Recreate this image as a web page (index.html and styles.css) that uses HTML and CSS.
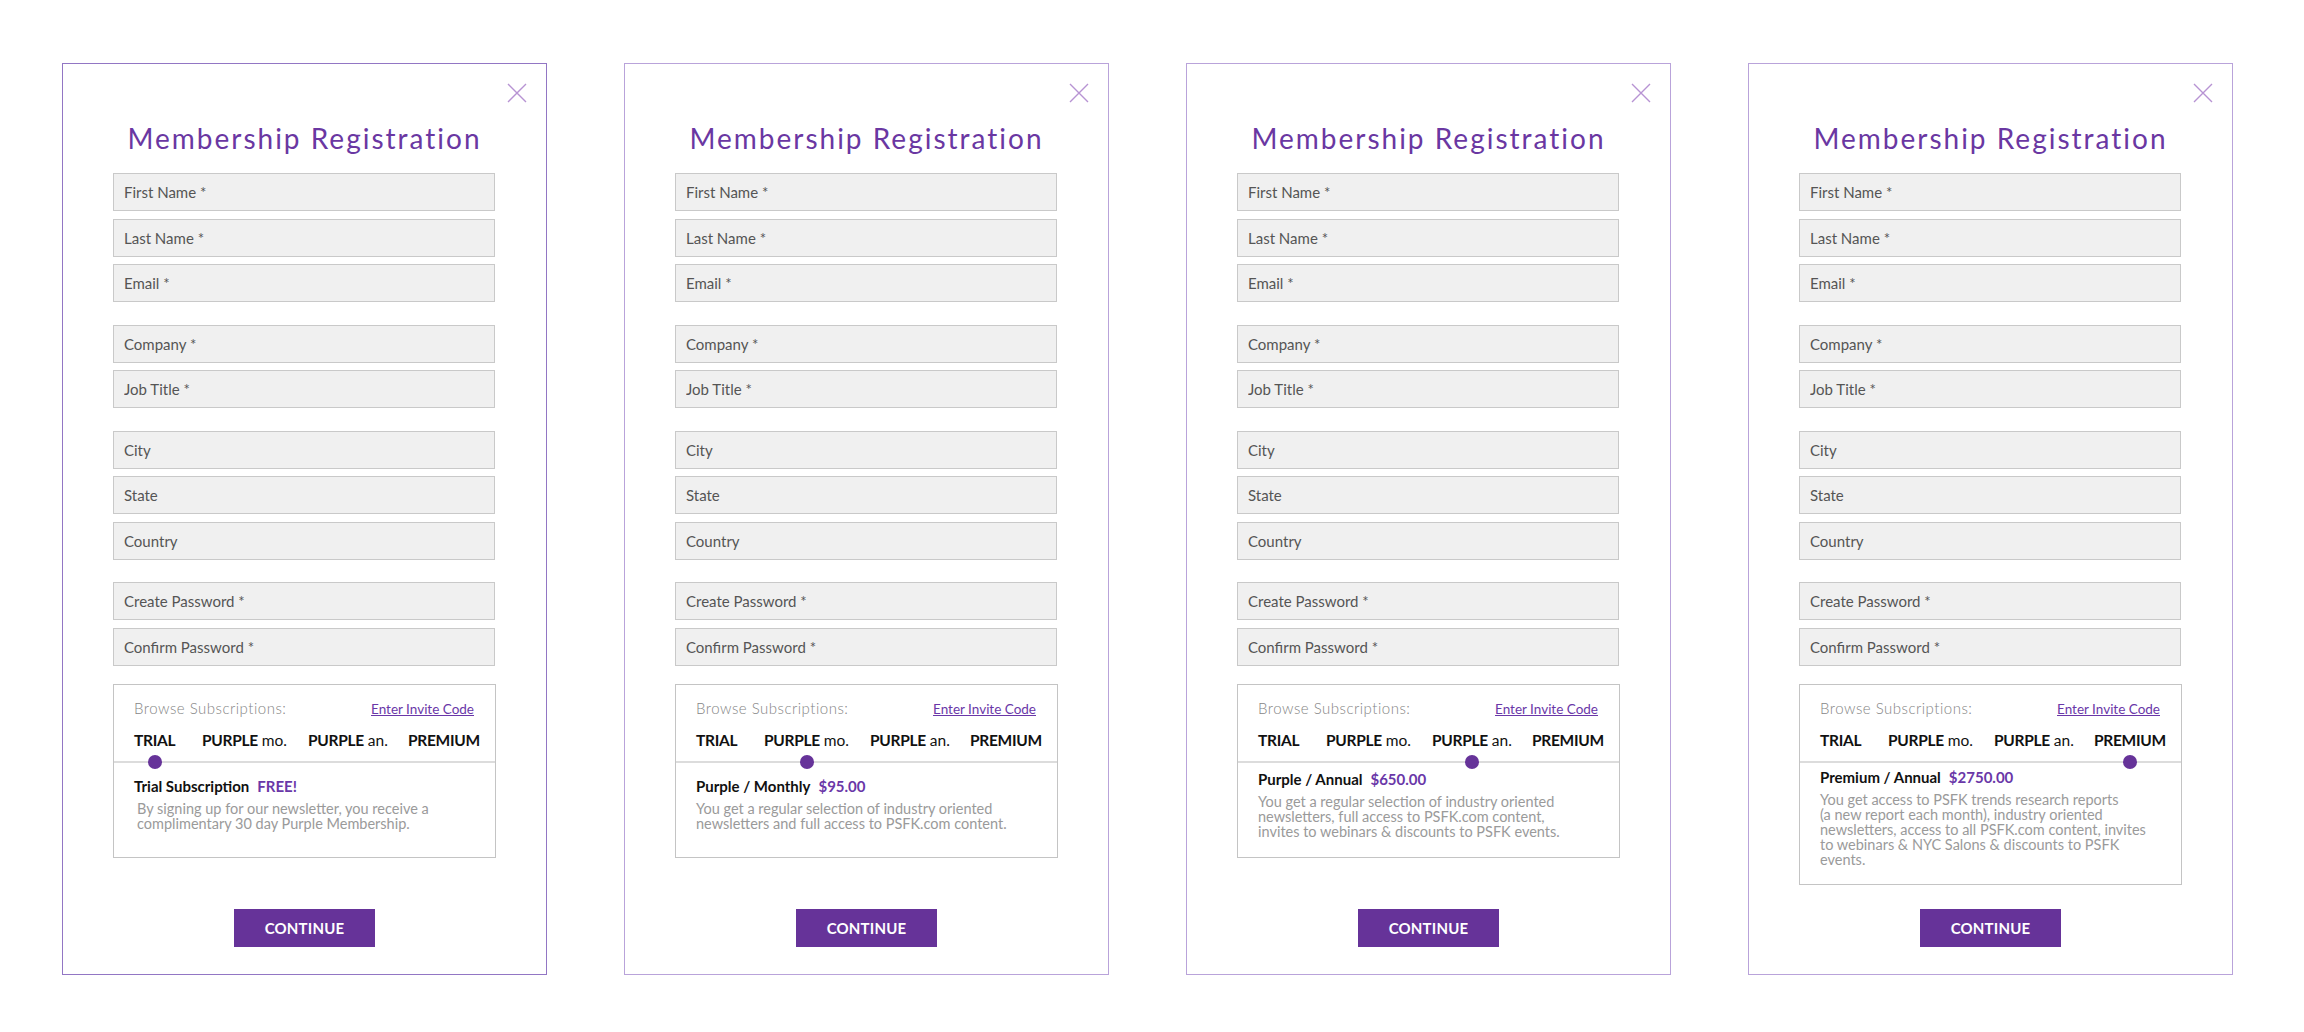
FILE: index.html
```html
<!DOCTYPE html>
<html lang="en">
<head>
<meta charset="utf-8">
<title>Membership Registration</title>
<link rel="stylesheet" href="styles.css">
</head>
<body>
<main class="board">

  <section class="card card-first">
    <button class="close" aria-label="Close"><svg viewBox="0 0 20 20" width="20" height="20"><path d="M1 1 L19 19 M19 1 L1 19" /></svg></button>
    <h1 class="title">Membership Registration</h1>
    <form class="form">
      <div class="group"><input class="field" placeholder="First Name *"><input class="field" placeholder="Last Name *"><input class="field" placeholder="Email *"></div>
      <div class="group"><input class="field" placeholder="Company *"><input class="field" placeholder="Job Title *"></div>
      <div class="group"><input class="field" placeholder="City"><input class="field" placeholder="State"><input class="field" placeholder="Country"></div>
      <div class="group"><input class="field" placeholder="Create Password *"><input class="field" placeholder="Confirm Password *"></div>
      <div class="subs">
        <div class="subs-top">
          <div class="subs-head"><span class="browse">Browse Subscriptions:</span><a class="invite" href="#">Enter Invite Code</a></div>
          <div class="tabs">
            <span class="tab active"><b>TRIAL</b></span>
            <span class="tab"><b>PURPLE</b> mo.</span>
            <span class="tab"><b>PURPLE</b> an.</span>
            <span class="tab"><b>PREMIUM</b></span>
          </div>
        </div>
        <div class="subs-body">
          <div class="plan"><b>Trial Subscription</b><span class="price">FREE!</span></div>
          <p class="desc indent">By signing up for our newsletter, you receive a<br>complimentary 30 day Purple Membership.</p>
        </div>
      </div>
    </form>
    <button class="continue" type="button">CONTINUE</button>
  </section>

  <section class="card">
    <button class="close" aria-label="Close"><svg viewBox="0 0 20 20" width="20" height="20"><path d="M1 1 L19 19 M19 1 L1 19" /></svg></button>
    <h1 class="title">Membership Registration</h1>
    <form class="form">
      <div class="group"><input class="field" placeholder="First Name *"><input class="field" placeholder="Last Name *"><input class="field" placeholder="Email *"></div>
      <div class="group"><input class="field" placeholder="Company *"><input class="field" placeholder="Job Title *"></div>
      <div class="group"><input class="field" placeholder="City"><input class="field" placeholder="State"><input class="field" placeholder="Country"></div>
      <div class="group"><input class="field" placeholder="Create Password *"><input class="field" placeholder="Confirm Password *"></div>
      <div class="subs">
        <div class="subs-top">
          <div class="subs-head"><span class="browse">Browse Subscriptions:</span><a class="invite" href="#">Enter Invite Code</a></div>
          <div class="tabs">
            <span class="tab"><b>TRIAL</b></span>
            <span class="tab active"><b>PURPLE</b> mo.</span>
            <span class="tab"><b>PURPLE</b> an.</span>
            <span class="tab"><b>PREMIUM</b></span>
          </div>
        </div>
        <div class="subs-body">
          <div class="plan"><b>Purple / Monthly</b><span class="price">$95.00</span></div>
          <p class="desc">You get a regular selection of industry oriented<br>newsletters and full access to PSFK.com content.</p>
        </div>
      </div>
    </form>
    <button class="continue" type="button">CONTINUE</button>
  </section>

  <section class="card">
    <button class="close" aria-label="Close"><svg viewBox="0 0 20 20" width="20" height="20"><path d="M1 1 L19 19 M19 1 L1 19" /></svg></button>
    <h1 class="title">Membership Registration</h1>
    <form class="form">
      <div class="group"><input class="field" placeholder="First Name *"><input class="field" placeholder="Last Name *"><input class="field" placeholder="Email *"></div>
      <div class="group"><input class="field" placeholder="Company *"><input class="field" placeholder="Job Title *"></div>
      <div class="group"><input class="field" placeholder="City"><input class="field" placeholder="State"><input class="field" placeholder="Country"></div>
      <div class="group"><input class="field" placeholder="Create Password *"><input class="field" placeholder="Confirm Password *"></div>
      <div class="subs">
        <div class="subs-top">
          <div class="subs-head"><span class="browse">Browse Subscriptions:</span><a class="invite" href="#">Enter Invite Code</a></div>
          <div class="tabs">
            <span class="tab"><b>TRIAL</b></span>
            <span class="tab"><b>PURPLE</b> mo.</span>
            <span class="tab active"><b>PURPLE</b> an.</span>
            <span class="tab"><b>PREMIUM</b></span>
          </div>
        </div>
        <div class="subs-body">
          <div class="plan"><b>Purple / Annual</b><span class="price">$650.00</span></div>
          <p class="desc">You get a regular selection of industry oriented<br>newsletters, full access to PSFK.com content,<br>invites to webinars &amp; discounts to PSFK events.</p>
        </div>
      </div>
    </form>
    <button class="continue" type="button">CONTINUE</button>
  </section>

  <section class="card">
    <button class="close" aria-label="Close"><svg viewBox="0 0 20 20" width="20" height="20"><path d="M1 1 L19 19 M19 1 L1 19" /></svg></button>
    <h1 class="title">Membership Registration</h1>
    <form class="form">
      <div class="group"><input class="field" placeholder="First Name *"><input class="field" placeholder="Last Name *"><input class="field" placeholder="Email *"></div>
      <div class="group"><input class="field" placeholder="Company *"><input class="field" placeholder="Job Title *"></div>
      <div class="group"><input class="field" placeholder="City"><input class="field" placeholder="State"><input class="field" placeholder="Country"></div>
      <div class="group"><input class="field" placeholder="Create Password *"><input class="field" placeholder="Confirm Password *"></div>
      <div class="subs">
        <div class="subs-top">
          <div class="subs-head"><span class="browse">Browse Subscriptions:</span><a class="invite" href="#">Enter Invite Code</a></div>
          <div class="tabs">
            <span class="tab"><b>TRIAL</b></span>
            <span class="tab"><b>PURPLE</b> mo.</span>
            <span class="tab"><b>PURPLE</b> an.</span>
            <span class="tab active"><b>PREMIUM</b></span>
          </div>
        </div>
        <div class="subs-body">
          <div class="plan"><b>Premium / Annual</b><span class="price">$2750.00</span></div>
          <p class="desc">You get access to PSFK trends research reports<br>(a new report each month), industry oriented<br>newsletters, access to all PSFK.com content, invites<br>to webinars &amp; NYC Salons &amp; discounts to PSFK<br>events.</p>
        </div>
      </div>
    </form>
    <button class="continue" type="button">CONTINUE</button>
  </section>

</main>
</body>
</html>
```

FILE: styles.css
```css
* { box-sizing: border-box; }

html, body {
  margin: 0;
  background: #ffffff;
}

body {
  font-family: "Lato", "Liberation Sans", sans-serif;
  color: #111;
}

.board {
  display: flex;
  gap: 77px;
  padding: 63px 0 0 62px;
}

.card {
  position: relative;
  width: 485px;
  height: 912px;
  border: 1px solid #b9a3da;
  display: flex;
  flex-direction: column;
  align-items: center;
  padding: 57px 50px 27px;
}

.card-first { border-color: #9276c4; }

.close {
  position: absolute;
  top: 19px;
  right: 19px;
  width: 20px;
  height: 20px;
  padding: 0;
  border: 0;
  background: none;
}

.close svg { display: block; }

.close path {
  stroke: #b793d3;
  stroke-width: 1.4;
  fill: none;
}

.title {
  margin: 0;
  font-size: 28px;
  line-height: 34px;
  font-weight: 400;
  color: #6a37a2;
  letter-spacing: 2px;
  white-space: nowrap;
}

.form {
  width: 383px;
  margin-top: 18px;
  display: flex;
  flex-direction: column;
  gap: 22.5px;
}

.group {
  display: flex;
  flex-direction: column;
  gap: 7.5px;
}

.field {
  display: block;
  width: 382px;
  height: 38px;
  margin: 0;
  padding: 0 10px;
  border: 1px solid #c9c9c9;
  background: #f0f0f0;
  font-family: inherit;
  font-size: 15px;
  color: #555;
  outline: none;
}

.field::placeholder { color: #555; opacity: 1; }

.subs {
  margin-top: -4px;
  border: 1px solid #c4c4c4;
  width: 383px;
}

.subs-top {
  padding: 14px 21px 11px 20px;
  border-bottom: 2px solid #dcdcdc;
}

.subs-head {
  display: flex;
  justify-content: space-between;
  align-items: baseline;
  line-height: 18px;
}

.browse {
  font-size: 15px;
  font-weight: 300;
  color: #858585;
  letter-spacing: 0.5px;
}

.invite {
  font-size: 13.5px;
  color: #6a37a8;
  text-decoration: underline;
  text-underline-offset: 1px;
}

.tabs {
  margin-top: 12px;
  display: grid;
  grid-template-columns: 68px 106px 100px auto;
  justify-items: start;
  font-size: 15.5px;
  line-height: 20px;
  color: #111;
}

.tab {
  position: relative;
  white-space: nowrap;
}

.tab b { font-weight: 700; letter-spacing: -0.3px; }

.tab.active::after {
  content: "";
  position: absolute;
  left: 50%;
  top: 100%;
  width: 14px;
  height: 14px;
  margin: 5px 0 0 -7px;
  border-radius: 50%;
  background: #663399;
}

.subs-body {
  min-height: 94px;
  padding: 5px 21px 17px 20px;
  display: flex;
  flex-direction: column;
  justify-content: center;
}

.plan {
  font-size: 15px;
  line-height: 18px;
  color: #111;
  white-space: nowrap;
}

.plan b { font-weight: 700; }

.price {
  margin-left: 8px;
  color: #6a37a8;
  font-weight: 700;
}

.desc {
  margin: 6px 0 0;
  font-size: 14.5px;
  line-height: 15px;
  color: #9a9a9a;
  white-space: nowrap;
}

.desc.indent { margin-left: 3px; }

.continue {
  margin-top: auto;
  width: 141px;
  height: 38px;
  border: 0;
  background: #663399;
  color: #fff;
  font-family: inherit;
  font-size: 15px;
  font-weight: 700;
  letter-spacing: 0.2px;
  padding: 0;
}
```
